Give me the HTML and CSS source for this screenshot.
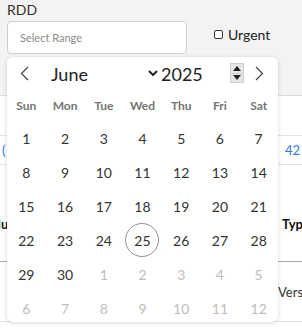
FILE: index.html
```html
<!DOCTYPE html>
<html lang="en">
<head>
    <meta charset="UTF-8">
    <meta name="viewport" content="width=device-width, initial-scale=1.0">
    <title>Orders</title>
    <link rel="stylesheet" href="styles.css">
</head>
<body>
    <div class="filters">
        <label class="field-label" for="rdd">RDD</label>
        <div class="filter-row">
            <input type="text" id="rdd" class="range-input" placeholder="Select Range">
            <label class="urgent"><span class="check"></span>Urgent</label>
        </div>
    </div>

    <div class="content">
        <div class="row data-row">
            <div class="cell-left link">(</div>
            <div class="cell-right link">42</div>
        </div>
        <div class="row head-row">
            <div class="cell-left shifted">Nu</div>
            <div class="cell-right type">Typ</div>
        </div>
        <div class="row data-row tall">
            <div class="cell-left"></div>
            <div class="cell-right vers">Vers</div>
        </div>
    </div>

    <!-- date picker popup -->
    <div class="calendar">
        <div class="cal-header">
            <span class="nav prev">
                <svg width="9" height="15" viewBox="0 0 9 15"><polyline points="8,1 1.5,7.5 8,14" fill="none" stroke="#444" stroke-width="1.2"/></svg>
            </span>
            <span class="month">June</span>
            <span class="caret">
                <svg width="10" height="6" viewBox="0 0 10 6"><polyline points="1,1 5,5 9,1" fill="none" stroke="#222" stroke-width="2"/></svg>
            </span>
            <span class="year">2025</span>
            <span class="spin">
                <span class="spin-btn"><svg width="8" height="5" viewBox="0 0 8 5"><polygon points="0,5 4,0 8,5" fill="#222"/></svg></span>
                <span class="spin-btn"><svg width="8" height="5" viewBox="0 0 8 5"><polygon points="0,0 4,5 8,0" fill="#222"/></svg></span>
            </span>
            <span class="nav next">
                <svg width="9" height="15" viewBox="0 0 9 15"><polyline points="1,1 7.5,7.5 1,14" fill="none" stroke="#444" stroke-width="1.2"/></svg>
            </span>
        </div>
        <div class="weekdays">
            <span>Sun</span><span>Mon</span><span>Tue</span><span>Wed</span><span>Thu</span><span>Fri</span><span>Sat</span>
        </div>
        <div class="days">
            <span>1</span><span>2</span><span>3</span><span>4</span><span>5</span><span>6</span><span>7</span>
            <span>8</span><span>9</span><span>10</span><span>11</span><span>12</span><span>13</span><span>14</span>
            <span>15</span><span>16</span><span>17</span><span>18</span><span>19</span><span>20</span><span>21</span>
            <span>22</span><span>23</span><span>24</span><span class="today">25</span><span>26</span><span>27</span><span>28</span>
            <span>29</span><span>30</span><span class="other">1</span><span class="other">2</span><span class="other">3</span><span class="other">4</span><span class="other">5</span>
            <span class="other">6</span><span class="other">7</span><span class="other">8</span><span class="other">9</span><span class="other">10</span><span class="other">11</span><span class="other">12</span>
        </div>
    </div>
</body>
</html>
```

FILE: styles.css
```css
* {
    box-sizing: border-box;
    margin: 0;
    padding: 0;
    font-family: 'Lato', 'Open Sans', sans-serif;
}
body {
    background: white;
    color: #333;
    overflow: hidden;
    width: 302px;
    height: 336px;
    position: relative;
}
.filters {
    background: #f3f3f3;
    height: 96px;
    border-bottom: 1px solid #dcdcdc;
    padding: 1px 7px 0;
}
.field-label {
    display: block;
    font-size: 14px;
    color: #3a3026;
    line-height: 17px;
    height: 20px;
}
.filter-row {
    display: flex;
    align-items: center;
}
.range-input {
    width: 180px;
    height: 33px;
    border: 1px solid #cfcfcf;
    border-radius: 4px;
    background: white;
    padding: 0 12px;
    font-size: 11px;
    color: #333;
    outline: none;
}
.range-input::placeholder {
    color: #8a8a8a;
}
.urgent {
    display: flex;
    align-items: center;
    margin-left: 27px;
    margin-bottom: 6px;
    font-size: 14px;
    color: #222;
}
.check {
    width: 9px;
    height: 9px;
    border: 1px solid #333;
    border-radius: 2px;
    background: white;
    margin-right: 5px;
}
.content {
    padding-top: 39px;
}
.row {
    display: flex;
    justify-content: space-between;
    align-items: center;
    white-space: nowrap;
    font-size: 13px;
}
.data-row {
    height: 30px;
    border-top: 1px solid #e3e3e3;
    border-bottom: 1px solid #e3e3e3;
}
.data-row.tall {
    height: 60px;
    border-top: none;
}
.head-row {
    height: 97px;
    padding-top: 22px;
    border-bottom: 1px solid #a8a8a8;
    font-weight: 700;
    color: #111;
}
.cell-left {
    padding-left: 2px;
}
.cell-left.shifted {
    margin-left: -11px;
}
.cell-right {
    width: 24px;
    overflow: hidden;
}
.link {
    color: #2f7bd8;
}
.cell-right.link {
    padding-left: 7px;
}
.type {
    padding-left: 4px;
}
.vers {
    padding-left: 0;
    color: #333;
}
.calendar {
    position: absolute;
    left: 7px;
    top: 57px;
    width: 271px;
    height: 265px;
    overflow: hidden;
    background: white;
    border-radius: 6px;
    box-shadow: 0 1px 4px rgba(0, 0, 0, 0.16);
}
.cal-header {
    height: 33px;
    display: flex;
    align-items: center;
    color: #222;
}
.nav {
    display: flex;
    align-items: center;
}
.prev {
    margin-left: 13px;
}
.month {
    font-size: 18px;
    margin-left: 22px;
    width: 97px;
}
.caret {
    display: flex;
    margin-top: -2px;
}
.year {
    font-size: 18px;
    margin-left: 3px;
}
.spin {
    display: flex;
    flex-direction: column;
    width: 14px;
    height: 20px;
    margin-left: 27px;
    margin-top: -1px;
    background: #e6e6e6;
    border: 1px solid #cfcfcf;
}
.spin-btn {
    flex: 1;
    display: flex;
    align-items: center;
    justify-content: center;
}
.spin-btn + .spin-btn {
    border-top: 1px solid #cfcfcf;
}
.next {
    margin-left: 11px;
}
.weekdays, .days {
    display: grid;
    grid-template-columns: repeat(7, 1fr);
    text-align: center;
}
.weekdays {
    height: 31px;
    align-items: center;
    font-size: 12px;
    font-weight: 700;
    color: #757575;
}
.days span {
    height: 34px;
    display: flex;
    align-items: center;
    justify-content: center;
    font-size: 14px;
    color: #333;
}
.days .other {
    color: #bdbdbd;
}
.days .today::before {
    content: '';
    position: absolute;
    width: 32px;
    height: 32px;
    border: 1px solid #8c929a;
    border-radius: 50%;
}
```
